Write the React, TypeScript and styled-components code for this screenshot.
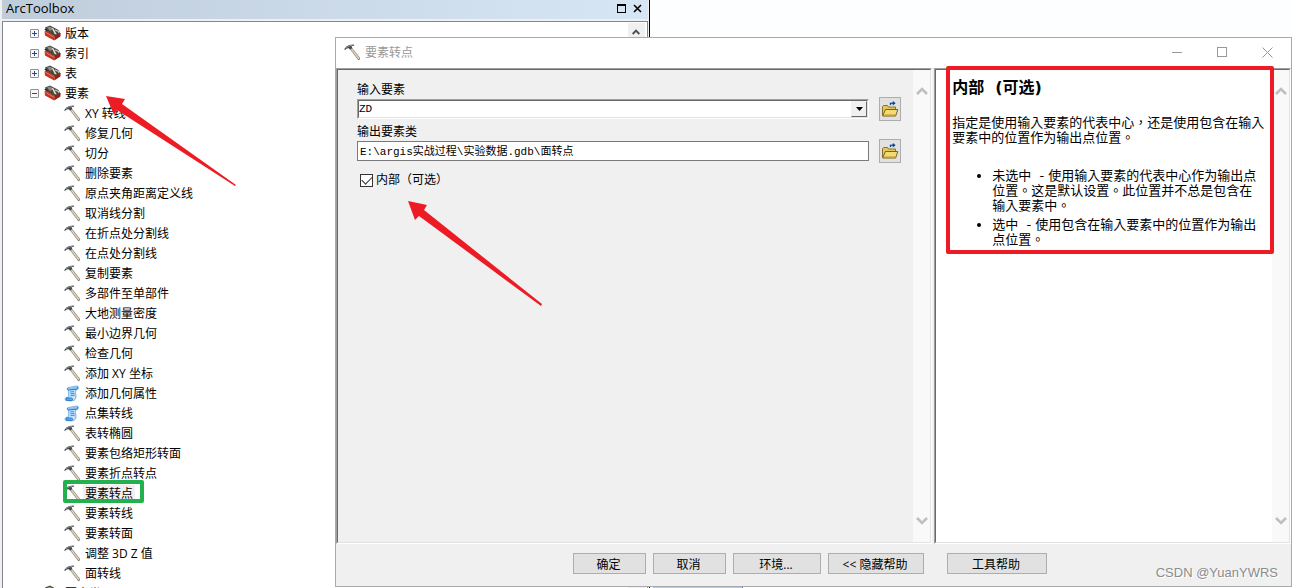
import React, { useState } from "react";
import styled, { createGlobalStyle } from "styled-components";

const GlobalStyle = createGlobalStyle`
  * { box-sizing: border-box; }
  body { margin: 0; background: #fdfeff; color: #000; }
  button, input, select { font: inherit; color: inherit; margin: 0; }
`;

const uiFont = `"Open Sans", "Noto Sans CJK SC", sans-serif`;
const monoFont = `"Liberation Mono", "Noto Sans CJK SC", monospace`;
const helpFont = `"DejaVu Sans", "Noto Sans CJK TC", sans-serif`;

const Desktop = styled.div`
  position: relative;
  height: 100vh;
  overflow: hidden;
  font: 12px/16px ${uiFont};
`;

/* ---------- Toolbox panel ---------- */

const ToolboxWindow = styled.section`
  display: flex;
  flex-direction: column;
  width: 650px;
  height: 100%;
  background: #f0f0f0;
  border-right: 1px solid #000;
  padding-right: 1px;
`;

const ToolboxTitle = styled.header`
  display: flex;
  align-items: center;
  gap: 7px;
  height: 19px;
  margin: 0 0 2px 2px;
  padding: 0 6px 3px 4px;
  background: linear-gradient(90deg, #bfcddb, #d7e6f5);
`;

const ToolboxName = styled.h1`
  flex: 1;
  margin: 0;
  font-size: 13px;
  font-weight: 400;
  line-height: 16px;
`;

const PlainButton = styled.button`
  display: flex;
  padding: 0;
  border: 0;
  background: none;
`;

const TreeFrame = styled.div`
  display: flex;
  flex: 1;
  min-height: 0;
  margin-left: 2px;
  border: 1px solid #828790;
  border-bottom: 0;
  background: #fff;
  overflow: hidden;
`;

const Tree = styled.ul`
  flex: 1;
  margin: 0;
  padding: 1px 0 0 27px;
  list-style: none;
`;

const Branch = styled.ul`
  margin: 0;
  padding: 0 0 0 34px;
  list-style: none;
`;

const TreeRow = styled.div`
  display: flex;
  align-items: center;
  gap: 3px;
  height: 20px;
  width: max-content;
  position: relative;
`;

const Expander = styled.button`
  display: flex;
  width: 9px;
  height: 9px;
  margin-right: 2px;
  padding: 0;
  border: 1px solid #919191;
  border-radius: 1px;
  background: #f8f8f8;
`;

const NodeLabel = styled.span<{ $selected?: boolean }>`
  padding: 1px 2px 0;
  margin: 0 -1px;
  line-height: 16px;
  background: ${(p) => (p.$selected ? "#f0f0f0" : "transparent")};
`;

const GreenMark = styled.span`
  position: absolute;
  inset: -3px -10px 0 -1px;
  border: 4px solid #22b14c;
  border-radius: 2px;
`;

const TreeScroll = styled.div`
  width: 17px;
  margin: 1px 2px 0 0;
  padding: 5px 4px;
  background: #f0f0f0;
`;

const StatusStrip = styled.div`
  position: absolute;
  left: 653px;
  bottom: 0;
  width: 90px;
  height: 2px;
  background: #b8c8e6;
  border-right: 1px solid #707888;
`;

/* ---------- Tool dialog ---------- */

const Dialog = styled.section`
  position: absolute;
  top: 37px;
  left: 335px;
  right: 0;
  bottom: 1px;
  display: flex;
  flex-direction: column;
  border: 1px solid #aaa;
  background: #f0f0f0;
`;

const DialogTitle = styled.header`
  display: flex;
  align-items: center;
  gap: 4px;
  height: 30px;
  padding: 0 18px 2px 8px;
  background: #fff;
  color: #999;
`;

const DialogName = styled.h2`
  flex: 1;
  margin: 0;
  padding-top: 2px;
  font: inherit;
`;

const WindowControls = styled.div`
  display: flex;
  gap: 34px;
`;

const Panes = styled.div`
  display: flex;
  flex: 1;
  gap: 2px;
  min-height: 0;
`;

const Pane = styled.div<{ $share: number; $bg: string }>`
  flex: ${(p) => p.$share} 1 0;
  display: flex;
  min-width: 0;
  border: 1px solid;
  border-color: #a0a0a0 #fff #fff #a0a0a0;
  background: ${(p) => p.$bg};
`;

const PaneInner = styled.div`
  display: flex;
  flex: 1;
  min-width: 0;
  border: 1px solid;
  border-color: #696969 #e3e3e3 #e3e3e3 #696969;
`;

const ScrollTrack = styled.div`
  display: flex;
  flex-direction: column;
  justify-content: space-between;
  align-items: center;
  width: 17px;
  padding: 16px 0;
  background: #f9f9f9;
`;

const Form = styled.form`
  flex: 1;
  min-width: 0;
  padding: 11px 12px 0 19px;
`;

const FieldLabel = styled.label`
  display: block;
  height: 16px;
  line-height: 18px;
`;

const FieldRow = styled.div`
  display: flex;
  align-items: center;
  gap: 10px;
  height: 24px;
  margin-bottom: 2px;
`;

const ComboBox = styled.div`
  display: grid;
  flex: 1;
  height: 20px;
  border: 1px solid;
  border-color: #a0a0a0 #fff #fff #a0a0a0;
`;

const ComboSelect = styled.select`
  grid-area: 1 / 1;
  appearance: none;
  width: 100%;
  height: 18px;
  padding: 0 18px 0 0;
  border: 1px solid;
  border-color: #696969 #e3e3e3 #e3e3e3 #696969;
  border-radius: 0;
  background: #fff;
  font: 11px/16px ${monoFont};
  outline: 0;
`;

const ComboArrow = styled.span`
  grid-area: 1 / 1;
  justify-self: end;
  display: flex;
  align-items: center;
  justify-content: center;
  width: 16px;
  height: 16px;
  margin: 1px 1px 0 0;
  border: 1px solid;
  border-color: #f0f0f0 #696969 #696969 #f0f0f0;
  background: #f0f0f0;
  pointer-events: none;
`;

const PathInput = styled.input`
  flex: 1;
  min-width: 0;
  height: 20px;
  padding: 0 2px 3px;
  border: 1px solid #7a7a7a;
  border-radius: 0;
  background: #fff;
  font: 11px/16px ${monoFont};
  outline: 0;
`;

const BrowseButton = styled.button`
  display: flex;
  align-items: center;
  justify-content: center;
  width: 22px;
  height: 24px;
  padding: 0;
  border: 1px solid #adadad;
  background: #e1e1e1;
`;

const CheckRow = styled.div`
  display: flex;
  align-items: center;
  gap: 3px;
  margin-top: 8px;
  padding-left: 3px;
  line-height: 18px;
`;

const CheckBox = styled.input`
  appearance: none;
  display: grid;
  place-items: center;
  width: 13px;
  height: 13px;
  border: 1px solid #333;
  background: #fff;
  &:checked::before {
    content: "";
    width: 9px;
    height: 5px;
    margin-bottom: 3px;
    border: solid #333;
    border-width: 0 0 1px 1px;
    transform: rotate(-45deg);
  }
`;

const HelpBody = styled.div`
  flex: 1;
  min-width: 0;
`;

const HelpArticle = styled.article`
  position: relative;
  padding: 8px 6px 7px 16px;
  font: 13px/15px ${helpFont};
`;

const HelpTitle = styled.h3`
  margin: 0 0 17px;
  font-size: 16px;
  line-height: 20px;
  font-weight: 700;
`;

const HelpText = styled.p`
  margin: 0 0 23px;
`;

const HelpList = styled.ul`
  display: flex;
  flex-direction: column;
  gap: 4px;
  margin: 0;
  padding: 0 8px 0 40px;
`;

const RedMark = styled.div`
  position: absolute;
  inset: -4px -2px 0 10px;
  border: 4px solid #ed1c24;
  border-radius: 2px;
`;

const DialogFooter = styled.footer`
  display: flex;
  align-items: center;
  gap: 7px;
  height: 42px;
  padding: 0 13px 3px 237px;
`;

const PushButton = styled.button<{ $w: number; $apart?: boolean }>`
  width: ${(p) => p.$w}px;
  height: 21px;
  margin-left: ${(p) => (p.$apart ? 16 : 0)}px;
  padding: 2px 2px 0 0;
  border: 1px solid #adadad;
  background: #e1e1e1;
  line-height: 16px;
  white-space: nowrap;
`;

const Watermark = styled.span`
  position: absolute;
  right: 13px;
  bottom: 4px;
  color: #8c8c8c;
  font: 13px/18px "Liberation Sans", sans-serif;
  text-shadow: 1px 1px 0 #fff;
`;

const Arrow = styled.svg<{ $x: number; $y: number }>`
  position: absolute;
  left: ${(p) => p.$x}px;
  top: ${(p) => p.$y}px;
  pointer-events: none;
`;

/* ---------- Icons ---------- */

const HammerIcon = () => (
  <svg width="17" height="17" viewBox="0 0 17 17" aria-hidden="true">
    <path d="M6.2 5.4 8.2 4 16 13.8 15.8 15.4 14.4 16.2Z" fill="#7d7565" />
    <path d="M6.8 5.4 8 4.6 15.4 13.8 15.2 14.8 14.4 15.2Z" fill="#ddd3bb" />
    <path d="M0 5.4 2.4 2.6 5.2 1 9.8.6 10.2 1.4 7.6 2.2 8.2 4 6.2 5.8 4.8 4.2 2.6 4.4 1.4 5.8Z" fill="#46494c" />
    <path d="M2.2 3.6 5.2 1.9 8.4 1.3" stroke="#a2a7aa" strokeWidth=".8" fill="none" />
  </svg>
);

const ToolsetIcon = () => (
  <svg width="17" height="16" viewBox="0 0 17 16" aria-hidden="true">
    <path d="M1 2.5 6 .5 14.5 5 16.5 8.5 12 12 3 7Z" fill="#4a4642" />
    <path d="M3 2.5 6 1.4 9 4 6 6Z" fill="#8f8a82" />
    <path d="M7.5 2.5 9.6 3.4 12.8 9.4 10.6 9Z" fill="#e4dcc6" />
    <path d="M11 5 14.4 6.4 15 8" stroke="#cfc9bd" strokeWidth="1.2" fill="none" />
    <path d="M.5 6.5 2 5.4 10.5 11 10.2 15.4 1 10.4Z" fill="#c8321f" />
    <path d="M10.5 11 16.6 8 16.4 11.4 10.2 15.4Z" fill="#8f2115" />
    <path d="M1.4 7.2 9.8 12.2" stroke="#ef7a62" strokeWidth="1" />
    <path d="M.8 4.2 3.2 5.6" stroke="#222" strokeWidth="1.4" />
  </svg>
);

const ScriptIcon = () => (
  <svg width="17" height="17" viewBox="0 0 17 17" aria-hidden="true">
    <path d="M4 2.6 12.8 1C14.8 1 15 3.4 13.4 4.6L11.8 5C10.6 8 12.8 10.5 11.8 13.2 11 15 9.6 15.8 7.6 15.8L2 15.6C.4 14.8.8 12.8 2.6 12.4L4.2 12.2C5.6 9.5 3.6 7 4.6 4.8Z" fill="#c4e0fa" stroke="#5ba3e6" strokeWidth=".8" />
    <path d="M4 2.8C2.8 3.6 3.2 5 4.6 5L12.6 4.2C14 3.6 14 2.2 13 1.8" fill="#8cc4f5" stroke="#2b78c8" strokeWidth="1" />
    <path d="M6.2 7 10 6.6M6.4 8.8 10.4 8.4M6.6 10.6 10.8 10.2" stroke="#3f90dc" strokeWidth="1" />
    <path d="M2.4 12.8 7.8 13.2C9 13.6 8.8 15.2 7.6 15.6L2.2 15.2Z" fill="#5fabf0" stroke="#2b78c8" strokeWidth="1" />
  </svg>
);

const OpenFolderIcon = () => (
  <svg width="18" height="18" viewBox="0 0 18 18" aria-hidden="true">
    <path d="M1.5 15.5V6.5L2.5 5.5H6.5L7.5 7H14.5V9.5" fill="#e3c75c" stroke="#8a7020" />
    <path d="M1.7 16 4.4 9.5H16.8L14.6 16Z" fill="#f3da78" stroke="#7a6316" />
    <path d="M3.6 14.8H14" stroke="#cfab36" />
    <path d="M8.4 5.6V3.4Q8.4 2.2 9.6 2.2H11.4V.2L15.2 3.2 11.4 6.2V4.2H10.4V5.6Z" fill="#0b4a8f" stroke="#fff" strokeWidth=".6" />
  </svg>
);

const ExpandGlyph = ({ open }: { open: boolean }) => (
  <svg width="7" height="7" viewBox="0 0 7 7" aria-hidden="true" shapeRendering="crispEdges">
    <path d={open ? "M1 3.5H6" : "M1 3.5H6M3.5 1V6"} stroke="#27479b" />
  </svg>
);

const Chevron = ({ down, small }: { down?: boolean; small?: boolean }) => (
  <svg width={small ? 8 : 12} height={small ? 8 : 10} viewBox="0 0 12 10" aria-hidden="true">
    <path
      d={down ? "M1 2 6 7 11 2" : "M1 8 6 3 11 8"}
      fill="none"
      stroke={small ? "#505050" : "#bfbfbf"}
      strokeWidth={small ? 3 : 2.6}
    />
  </svg>
);

/* ---------- Data ---------- */

type Tool = { name: string; script?: boolean };

const closedSets = ["版本", "索引", "表"];

const featureTools: Tool[] = [
  { name: "XY 转线" },
  { name: "修复几何" },
  { name: "切分" },
  { name: "删除要素" },
  { name: "原点夹角距离定义线" },
  { name: "取消线分割" },
  { name: "在折点处分割线" },
  { name: "在点处分割线" },
  { name: "复制要素" },
  { name: "多部件至单部件" },
  { name: "大地测量密度" },
  { name: "最小边界几何" },
  { name: "检查几何" },
  { name: "添加 XY 坐标" },
  { name: "添加几何属性", script: true },
  { name: "点集转线", script: true },
  { name: "表转椭圆" },
  { name: "要素包络矩形转面" },
  { name: "要素折点转点" },
  { name: "要素转点" },
  { name: "要素转线" },
  { name: "要素转面" },
  { name: "调整 3D Z 值" },
  { name: "面转线" },
];

const Toolset = ({ name, open = false }: { name: string; open?: boolean }) => (
  <TreeRow>
    <Expander type="button" aria-label={name} aria-expanded={open}>
      <ExpandGlyph open={open} />
    </Expander>
    <ToolsetIcon />
    <NodeLabel>{name}</NodeLabel>
  </TreeRow>
);

const PaneScroll = () => (
  <ScrollTrack>
    <PlainButton type="button" aria-label="向上滚动">
      <Chevron />
    </PlainButton>
    <PlainButton type="button" aria-label="向下滚动">
      <Chevron down />
    </PlainButton>
  </ScrollTrack>
);

export default function App() {
  const [inside, setInside] = useState(true);
  const [output, setOutput] = useState("E:\\argis实战过程\\实验数据.gdb\\面转点");

  return (
    <Desktop>
      <GlobalStyle />
      <ToolboxWindow>
        <ToolboxTitle>
          <ToolboxName>ArcToolbox</ToolboxName>
          <PlainButton type="button" aria-label="最大化">
            <svg width="9" height="9" viewBox="0 0 9 9" shapeRendering="crispEdges">
              <path d="M.5 .5H8.5V8.5H.5ZM0 1.5H9" fill="none" stroke="#000" />
            </svg>
          </PlainButton>
          <PlainButton type="button" aria-label="关闭">
            <svg width="9" height="9" viewBox="0 0 9 9">
              <path d="M1 1 8 8M8 1 1 8" stroke="#000" strokeWidth="1.6" />
            </svg>
          </PlainButton>
        </ToolboxTitle>
        <TreeFrame>
          <Tree>
            {closedSets.map((name) => (
              <li key={name}>
                <Toolset name={name} />
              </li>
            ))}
            <li>
              <Toolset name="要素" open />
              <Branch>
                {featureTools.map((tool) => {
                  const selected = tool.name === "要素转点";
                  return (
                    <li key={tool.name}>
                      <TreeRow>
                        {tool.script ? <ScriptIcon /> : <HammerIcon />}
                        <NodeLabel $selected={selected}>{tool.name}</NodeLabel>
                        {selected && <GreenMark />}
                      </TreeRow>
                    </li>
                  );
                })}
              </Branch>
            </li>
            <li>
              <Toolset name="要素类" />
            </li>
          </Tree>
          <TreeScroll>
            <PlainButton type="button" aria-label="向上滚动">
              <Chevron small />
            </PlainButton>
          </TreeScroll>
        </TreeFrame>
      </ToolboxWindow>
      <StatusStrip />

      <Dialog>
        <DialogTitle>
          <HammerIcon />
          <DialogName>要素转点</DialogName>
          <WindowControls>
            <PlainButton type="button" aria-label="最小化">
              <svg width="11" height="11" viewBox="0 0 11 11" shapeRendering="crispEdges">
                <path d="M0 5.5H10" stroke="#999" />
              </svg>
            </PlainButton>
            <PlainButton type="button" aria-label="最大化">
              <svg width="11" height="11" viewBox="0 0 11 11" shapeRendering="crispEdges">
                <path d="M.5 .5H9.5V9.5H.5Z" fill="none" stroke="#999" />
              </svg>
            </PlainButton>
            <PlainButton type="button" aria-label="关闭">
              <svg width="11" height="11" viewBox="0 0 11 11">
                <path d="M.5 .5 10.5 10.5M10.5 .5 .5 10.5" stroke="#999" />
              </svg>
            </PlainButton>
          </WindowControls>
        </DialogTitle>

        <Panes>
          <Pane $share={596} $bg="#f0f0f0">
            <PaneInner>
              <Form>
                <FieldLabel htmlFor="in-features">输入要素</FieldLabel>
                <FieldRow>
                  <ComboBox>
                    <ComboSelect id="in-features" defaultValue="ZD">
                      <option>ZD</option>
                    </ComboSelect>
                    <ComboArrow>
                      <svg width="7" height="4" viewBox="0 0 7 4" aria-hidden="true">
                        <path d="M0 0H7L3.5 4Z" />
                      </svg>
                    </ComboArrow>
                  </ComboBox>
                  <BrowseButton type="button" aria-label="浏览输入要素">
                    <OpenFolderIcon />
                  </BrowseButton>
                </FieldRow>
                <FieldLabel htmlFor="out-features">输出要素类</FieldLabel>
                <FieldRow>
                  <PathInput id="out-features" value={output} onChange={(e) => setOutput(e.target.value)} />
                  <BrowseButton type="button" aria-label="浏览输出要素类">
                    <OpenFolderIcon />
                  </BrowseButton>
                </FieldRow>
                <CheckRow>
                  <CheckBox
                    id="inside"
                    type="checkbox"
                    checked={inside}
                    onChange={(e) => setInside(e.target.checked)}
                  />
                  <label htmlFor="inside">内部（可选）</label>
                </CheckRow>
              </Form>
              <PaneScroll />
            </PaneInner>
          </Pane>

          <Pane $share={356} $bg="#fff">
            <PaneInner>
              <HelpBody>
                <HelpArticle>
                  <HelpTitle>内部&nbsp; (可选)</HelpTitle>
                  <HelpText>指定是使用输入要素的代表中心，还是使用包含在输入要素中的位置作为输出点位置。</HelpText>
                  <HelpList>
                    <li>未选中&nbsp; - 使用输入要素的代表中心作为输出点位置。这是默认设置。此位置并不总是包含在输入要素中。</li>
                    <li>选中&nbsp; - 使用包含在输入要素中的位置作为输出点位置。</li>
                  </HelpList>
                  <RedMark />
                </HelpArticle>
              </HelpBody>
              <PaneScroll />
            </PaneInner>
          </Pane>
        </Panes>

        <DialogFooter>
          <PushButton type="button" $w={73}>确定</PushButton>
          <PushButton type="button" $w={73}>取消</PushButton>
          <PushButton type="button" $w={88}>环境...</PushButton>
          <PushButton type="button" $w={96}>&lt;&lt; 隐藏帮助</PushButton>
          <PushButton type="button" $w={100} $apart>工具帮助</PushButton>
        </DialogFooter>
        <Watermark>CSDN @YuanYWRS</Watermark>
      </Dialog>

      <Arrow $x={106} $y={95} width="132" height="92" viewBox="0 0 132 92" aria-hidden="true">
        <path d="M0 1 19 4 16 9 130 90 129 91 11 15 8 20Z" fill="#ed1c24" />
      </Arrow>
      <Arrow $x={408} $y={201} width="136" height="106" viewBox="0 0 136 106" aria-hidden="true">
        <path d="M0 0 19 4 16 9 134 103 133 105 11 15 7 19Z" fill="#ed1c24" />
      </Arrow>
    </Desktop>
  );
}
